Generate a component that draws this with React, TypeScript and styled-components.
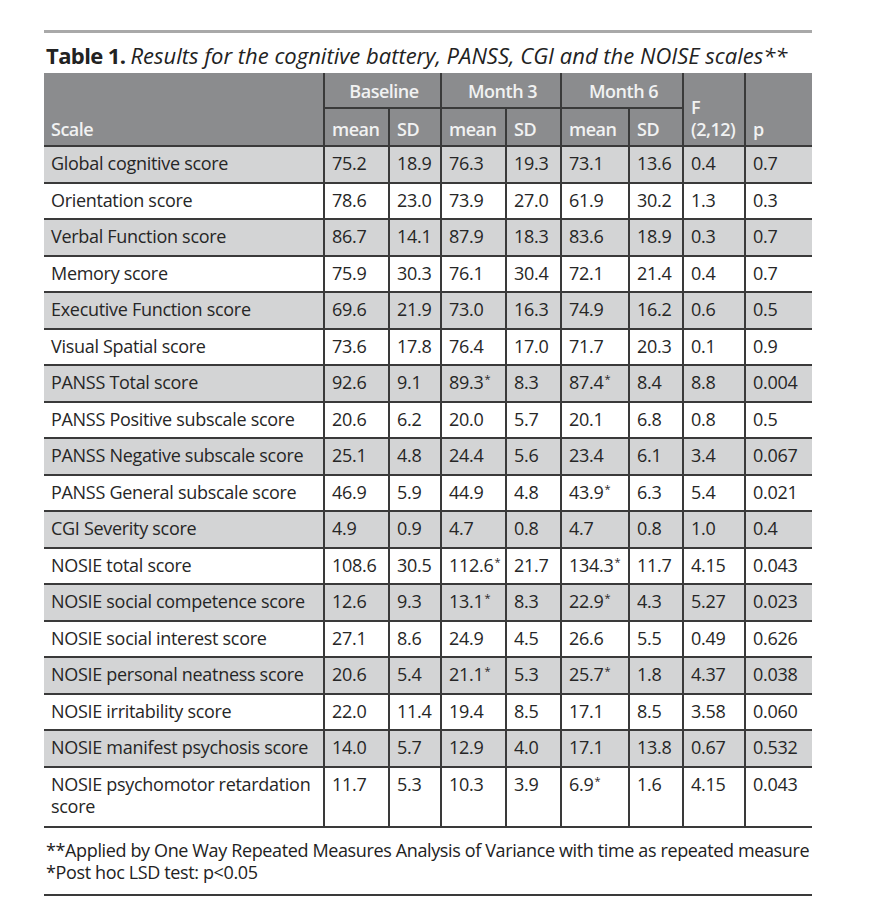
import React from "react";
import styled, { createGlobalStyle } from "styled-components";

const Global = createGlobalStyle`
  html, body { margin: 0; padding: 0; background: #ffffff; }
  body { font-family: "Open Sans", "Noto Sans", sans-serif; color: #333; }
`;

const Page = styled.div`
  width: 874px;
  height: 922px;
  box-sizing: border-box;
  padding: 30px 0 0 44px;
  background: #fff;
`;

const Frame = styled.div`
  width: 768px;
  display: flex;
  flex-direction: column;
`;

const TopRule = styled.div`
  height: 3px;
  background: #a9a9a9;
`;

const Title = styled.div`
  margin-top: 3px;
  height: 37px;
  display: flex;
  align-items: center;
  font-size: 22px;
  letter-spacing: 0;
  color: #222;
  white-space: nowrap;
  padding-left: 2px;
  b { font-weight: 700; margin-right: 5px; letter-spacing: -0.6px; }
  i { font-style: italic; }
`;

const Table = styled.table`
  border-collapse: collapse;
  width: 768px;
  table-layout: fixed;
  font-size: 18px;
  letter-spacing: -0.3px;
`;

const HeadCell = styled.th<{ $align?: string; $h?: number }>`
  background: #8b8c8e;
  color: #f1f2f2;
  font-weight: 600;
  text-align: ${(p) => p.$align || "left"};
  vertical-align: bottom;
  padding: 0 4px 5px 7px;
  line-height: 22px;
  height: ${(p) => p.$h || 36}px;
  box-sizing: border-box;
  border: 2px solid #3a3a3a;
  border-top: none;
  white-space: nowrap;
  letter-spacing: -0.5px;
  &:first-child { border-left: none; }
  &:last-child { border-right: none; }
`;

const Row = styled.tr<{ $shade: boolean }>`
  background: ${(p) => (p.$shade ? "#d3d4d5" : "#ffffff")};
`;

const Cell = styled.td<{ $tall?: boolean }>`
  height: ${(p) => (p.$tall ? 60 : 36.5)}px;
  box-sizing: border-box;
  padding: 5px 3px 0 7px;
  line-height: 22px;
  vertical-align: top;
  color: #262626;
  white-space: nowrap;
  border: 2px solid #3a3a3a;
  &:first-child { border-left: none; white-space: normal; }
  &:last-child { border-right: none; }
`;

const Star = styled.span`
  font-size: 11px;
  vertical-align: 6px;
  line-height: 0;
  margin-left: 1px;
`;

const Notes = styled.div`
  padding: 11px 0 0 2px;
  font-size: 18px;
  letter-spacing: -0.37px;
  line-height: 22px;
  color: #222;
  height: 66px;
  box-sizing: border-box;
  white-space: nowrap;
`;

const BottomRule = styled.div`
  height: 2px;
  background: #3a3a3a;
`;

type Row = [string, string, string, string, string, string, string, string, string];

const rows: Row[] = [
  ["Global cognitive score", "75.2", "18.9", "76.3", "19.3", "73.1", "13.6", "0.4", "0.7"],
  ["Orientation score", "78.6", "23.0", "73.9", "27.0", "61.9", "30.2", "1.3", "0.3"],
  ["Verbal Function score", "86.7", "14.1", "87.9", "18.3", "83.6", "18.9", "0.3", "0.7"],
  ["Memory score", "75.9", "30.3", "76.1", "30.4", "72.1", "21.4", "0.4", "0.7"],
  ["Executive Function score", "69.6", "21.9", "73.0", "16.3", "74.9", "16.2", "0.6", "0.5"],
  ["Visual Spatial score", "73.6", "17.8", "76.4", "17.0", "71.7", "20.3", "0.1", "0.9"],
  ["PANSS Total score", "92.6", "9.1", "89.3*", "8.3", "87.4*", "8.4", "8.8", "0.004"],
  ["PANSS Positive subscale score", "20.6", "6.2", "20.0", "5.7", "20.1", "6.8", "0.8", "0.5"],
  ["PANSS Negative subscale score", "25.1", "4.8", "24.4", "5.6", "23.4", "6.1", "3.4", "0.067"],
  ["PANSS General subscale score", "46.9", "5.9", "44.9", "4.8", "43.9*", "6.3", "5.4", "0.021"],
  ["CGI Severity score", "4.9", "0.9", "4.7", "0.8", "4.7", "0.8", "1.0", "0.4"],
  ["NOSIE total score", "108.6", "30.5", "112.6*", "21.7", "134.3*", "11.7", "4.15", "0.043"],
  ["NOSIE social competence score", "12.6", "9.3", "13.1*", "8.3", "22.9*", "4.3", "5.27", "0.023"],
  ["NOSIE social interest score", "27.1", "8.6", "24.9", "4.5", "26.6", "5.5", "0.49", "0.626"],
  ["NOSIE personal neatness score", "20.6", "5.4", "21.1*", "5.3", "25.7*", "1.8", "4.37", "0.038"],
  ["NOSIE irritability score", "22.0", "11.4", "19.4", "8.5", "17.1", "8.5", "3.58", "0.060"],
  ["NOSIE manifest psychosis score", "14.0", "5.7", "12.9", "4.0", "17.1", "13.8", "0.67", "0.532"],
  ["NOSIE psychomotor retardation score", "11.7", "5.3", "10.3", "3.9", "6.9*", "1.6", "4.15", "0.043"],
];

const widths = [280, 65, 52, 65, 55, 68, 54, 62, 67];

function Val({ v }: { v: string }) {
  if (v.endsWith("*")) {
    return (
      <>
        {v.slice(0, -1)}
        <Star>*</Star>
      </>
    );
  }
  return <>{v}</>;
}

export default function App() {
  return (
    <Page>
      <Global />
      <Frame>
        <TopRule />
        <Title>
          <b>Table 1.</b>
          <i>Results for the cognitive battery, PANSS, CGI and the NOISE scales**</i>
        </Title>
        <Table>
          <colgroup>
            {widths.map((w, i) => (
              <col key={i} style={{ width: w }} />
            ))}
          </colgroup>
          <thead>
            <tr>
              <HeadCell rowSpan={2}>Scale</HeadCell>
              <HeadCell colSpan={2} $align="center" $h={35}>Baseline</HeadCell>
              <HeadCell colSpan={2} $align="center" $h={35}>Month 3</HeadCell>
              <HeadCell colSpan={2} $align="center" $h={35}>Month 6</HeadCell>
              <HeadCell rowSpan={2}>
                F<br />(2,12)
              </HeadCell>
              <HeadCell rowSpan={2}>p</HeadCell>
            </tr>
            <tr>
              <HeadCell $h={38}>mean</HeadCell>
              <HeadCell $h={38}>SD</HeadCell>
              <HeadCell $h={38}>mean</HeadCell>
              <HeadCell $h={38}>SD</HeadCell>
              <HeadCell $h={38}>mean</HeadCell>
              <HeadCell $h={38}>SD</HeadCell>
            </tr>
          </thead>
          <tbody>
            {rows.map((r, i) => (
              <Row key={r[0]} $shade={i % 2 === 0}>
                {r.map((c, j) => (
                  <Cell key={j} $tall={i === rows.length - 1}>
                    <Val v={c} />
                  </Cell>
                ))}
              </Row>
            ))}
          </tbody>
        </Table>
        <Notes>
          **Applied by One Way Repeated Measures Analysis of Variance with time as repeated measure
          <br />
          *Post hoc LSD test: p&lt;0.05
        </Notes>
        <BottomRule />
      </Frame>
    </Page>
  );
}
